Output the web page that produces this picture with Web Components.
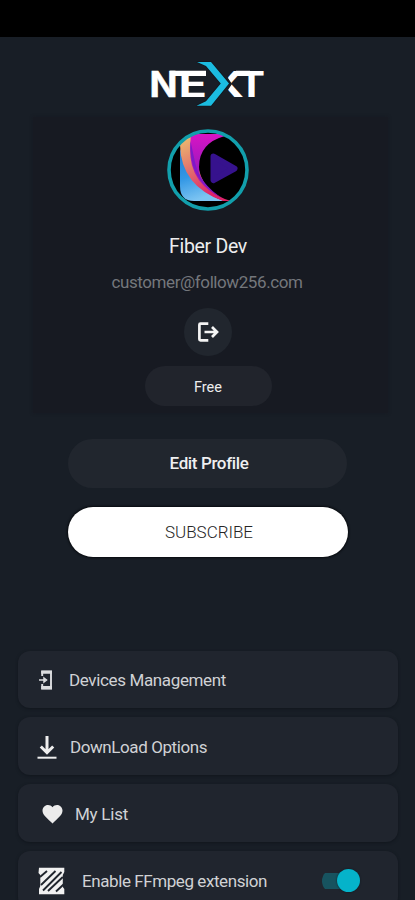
<!DOCTYPE html>
<html lang="en">
<head>
<meta charset="utf-8">
<title>Profile</title>
<style>
html,body{margin:0;height:900px;overflow:hidden;background:#181e26}
body{font-family:Roboto,"Liberation Sans",sans-serif}
</style>
</head>
<body>
<profile-screen></profile-screen>
<script>
const define = (name, markup, setup) => customElements.define(name, class extends HTMLElement {
  constructor() {
    super();
    this.attachShadow({ mode: 'open' }).innerHTML = markup;
  }
  connectedCallback() { if (setup) setup(this); }
});

/* Single line of text whose tracking is adjusted to a given width. */
define('tracked-text', `<style>
:host{display:block;white-space:pre;line-height:1}
span{display:block;width:max-content}
</style><span></span>`, el => {
  const s = el.shadowRoot.querySelector('span');
  s.textContent = el.getAttribute('text');
  const n = s.textContent.length;
  const w = parseFloat(el.getAttribute('width'));
  const gap = (w - s.getBoundingClientRect().width) / n;
  s.style.letterSpacing = gap.toFixed(3) + 'px';
});

define('brand-logo', `<style>
:host{display:block;width:116px;height:46px}
svg{display:block}
text{font-family:Inter,sans-serif;font-weight:700;fill:#fff}
</style>
<svg width="116" height="46" viewBox="150 61 116 46">
<defs><clipPath id="r"><path d="M216 60H246V108H216L232 84Z"/></clipPath></defs>
<text x="149.500" y="96.600" font-size="35.500" textLength="28" lengthAdjust="spacingAndGlyphs" stroke="#fff" stroke-width=".5">N</text>
<text x="178.500" y="96.600" font-size="35.500" textLength="28.500" lengthAdjust="spacingAndGlyphs">E</text>
<g clip-path="url(#r)"><text x="209" y="96.600" font-size="35.500" textLength="35" lengthAdjust="spacingAndGlyphs">X</text></g>
<text x="238" y="96.600" font-size="35.500" textLength="27" lengthAdjust="spacingAndGlyphs">T</text>
<path d="M170 70.800H206V76H174Z M236 70.800H250V76H236Z" fill="#fff"/>
<path d="M197 62H211L229 83.500L211 105.800H196.500L206 101.200L220.800 83.500L206 66Z" fill="#1bbce0" stroke="#12171e" stroke-width="1.600" paint-order="stroke"/>
</svg>`);

define('user-avatar', `<style>
:host{display:block;width:82px;height:82px}
svg{display:block}
</style>
<svg width="82" height="82" viewBox="167 129 82 82">
<defs>
<clipPath id="c"><circle cx="208" cy="170" r="38"/></clipPath>
<linearGradient id="b" x1="0" y1="0" x2=".3" y2="1"><stop offset="0" stop-color="#247ad0"/><stop offset=".55" stop-color="#3297e5"/><stop offset="1" stop-color="#7cc4f2"/></linearGradient>
<linearGradient id="o" x1="0" y1="0" x2=".35" y2="1"><stop offset="0" stop-color="#edc86f"/><stop offset=".5" stop-color="#e3786d"/><stop offset="1" stop-color="#df2368"/></linearGradient>
<linearGradient id="p" x1="0" y1="0" x2="0" y2="1"><stop offset="0" stop-color="#d814c4"/><stop offset=".5" stop-color="#a218be"/><stop offset="1" stop-color="#c51c8f"/></linearGradient>
</defs>
<circle cx="208" cy="170" r="38" fill="#000"/>
<g clip-path="url(#c)">
<path d="M180 148V186Q180 201 194 201H224Q192 190 180 148Z" fill="url(#b)"/>
<path d="M180 145Q182 134 195 133L199 170Q205 194 231 201H223Q181 186 180 145Z" fill="url(#o)"/>
<path d="M191 134H225V136Q199 143 199 167Q199 190 228 200Q189 187 190 147Z" fill="url(#p)"/>
<path d="M190.500 141Q188 182 223 198.500Q199 184 194.500 160Z" fill="#7d1ac6"/>
<path d="M213.500 156.500L234.500 168.500L213.500 180Z" fill="#36128d" stroke="#36128d" stroke-width="6" stroke-linejoin="round"/>
</g>
<circle cx="208" cy="170" r="39" fill="none" stroke="#129fac" stroke-width="3.600"/>
</svg>`);

define('pill-button', `<style>
:host{display:flex;align-items:center;justify-content:center;box-sizing:border-box;flex:none;background:#21262e;border-radius:30px}
</style><slot></slot>`);

define('ui-icon', `<style>:host{display:block;flex:none}svg{display:block;overflow:visible}</style><svg></svg>`, el => {
  const icons = {
    logout: [24, 24, '<g fill="none" stroke="#f4f4f4" stroke-width="2.700"><path d="M12.300 3.600H4.500Q3.400 3.600 3.400 4.700V19.300Q3.400 20.400 4.500 20.400H12.300"/><path d="M8.500 12H20.500M16 7L21 12L16 17"/></g>'],
    device: [14, 20, '<path d="M3.200 6V1.700H12V18.300H3.200V14" fill="none" stroke="#dcdddf" stroke-width="1.900"/><path d="M2.200.5H13V3.800H2.200ZM2.200 16H13V19.500H2.200Z" fill="#dcdddf"/><path d="M0 10H6M5 8L7.500 10L5 12Z" fill="#dcdddf" stroke="#dcdddf" stroke-width="1.500"/>'],
    download: [20, 24, '<path d="M10 1V17.500M3.800 11.500L10 17.700L16.200 11.500" fill="none" stroke="#eee" stroke-width="3"/><path d="M.5 22.700H19.500" stroke="#eee" stroke-width="2"/>'],
    heart: [21, 20, '<path d="M10.500 19.400L9 18C3.500 13 .5 10.300 .5 6.600C.5 3.500 2.900 1 6 1C7.700 1 9.400 1.900 10.500 3.200C11.600 1.900 13.300 1 15 1C18.100 1 20.500 3.500 20.500 6.600C20.500 10.300 17.500 13 12 18Z" fill="#ececec"/>'],
    ffmpeg: [27, 28, '<path d="M1 .7H26.300V5L24.800 8V20L26.300 22V27.300H1V22L2.300 19V8L.5 6Z" fill="#f1f1f1"/><g stroke="#20252d" stroke-width="1.900" fill="none"><path d="M2 10L9 4M3 18L17.500 4M5 23.500L23.500 5M10 24L24.800 10M18 24.500L25.500 17.500"/></g>']
  };
  const [w, h, body] = icons[el.getAttribute('name')];
  const svg = el.shadowRoot.querySelector('svg');
  svg.setAttribute('width', w);
  svg.setAttribute('height', h);
  svg.setAttribute('viewBox', `0 0 ${w} ${h}`);
  svg.innerHTML = body;
});

define('toggle-switch', `<style>
:host{display:flex;align-items:center;justify-content:flex-end;width:38px;height:24px;flex:none;background:linear-gradient(#17535f,#17535f) 0 50%/32px 16px no-repeat;border-radius:12px}
i{width:23px;height:23px;border-radius:50%;background:#05b3ca;box-shadow:0 0 2px #0b1b23}
</style><i></i>`);

define('menu-row', `<style>
:host{display:flex;align-items:center;box-sizing:border-box;height:57.300px;padding-top:1px;border-radius:12px;background:#20252e;box-shadow:0 1px 3px #11161d}
slot[name=icon]{display:block}
slot[name=end]{display:block;margin-left:auto}
::slotted(tracked-text){padding-top:2px}
</style><slot name="icon"></slot><slot></slot><slot name="end"></slot>`);

define('profile-screen', `<style>
:host{display:flex;flex-direction:column;align-items:center;box-sizing:border-box;width:415px;height:900px;overflow:hidden;padding-top:37px;background:linear-gradient(#000 0 37px,#181e26 37px)}
brand-logo{margin-top:24px;flex:none}
section{display:flex;flex-direction:column;align-items:center;width:355px;height:296px;margin:10px 0 0 5px;background:#171a22;padding-top:12px;box-sizing:border-box;flex:none;box-shadow:0 0 3px #171a22}
user-avatar{margin-right:4px;flex:none}
.name{font-size:19.500px;color:#ededee;margin:26px 4px 0 0;font-weight:400}
.mail{font-size:17px;color:#74777c;margin:17px 6px 0 0}
.out{width:48px;height:48px;margin:17px 4px 0 0}
.plan{width:127px;height:40px;margin:10px 4px 0 0;padding-top:5px;background:#21242c;font-size:14.500px;color:#ededed}
.edit{width:279px;height:49.500px;margin-top:25.500px;font-size:17px;font-weight:500;color:#efeff0;padding-left:3px}
.sub{width:280px;height:49.500px;margin:19px 0 0 1px;padding:1px 0 0 2px;background:#fff;font-size:17px;color:#252525;font-weight:300;box-shadow:0 0 2px 1px #080b0f}
nav{display:flex;flex-direction:column;gap:9.700px;width:380px;margin:94px 0 0 1px;flex:none;font-size:17px;color:#d0d2d5}
</style>
<brand-logo></brand-logo>
<section>
<user-avatar></user-avatar>
<tracked-text class="name" text="Fiber Dev" width="78"></tracked-text>
<tracked-text class="mail" text="customer@follow256.com" width="191"></tracked-text>
<pill-button class="out"><ui-icon name="logout"></ui-icon></pill-button>
<pill-button class="plan"><tracked-text text="Free" width="28"></tracked-text></pill-button>
</section>
<pill-button class="edit"><tracked-text text="Edit Profile" width="78.500"></tracked-text></pill-button>
<pill-button class="sub"><tracked-text text="SUBSCRIBE" width="88"></tracked-text></pill-button>
<nav>
<menu-row><ui-icon slot="icon" name="device" style="margin:0 16px 0 21px"></ui-icon><tracked-text text="Devices Management" width="157"></tracked-text></menu-row>
<menu-row><ui-icon slot="icon" name="download" style="margin:0 13px 0 19px"></ui-icon><tracked-text text="DownLoad Options" width="137"></tracked-text></menu-row>
<menu-row><ui-icon slot="icon" name="heart" style="margin:0 12px 0 24px"></ui-icon><tracked-text text="My List" width="53"></tracked-text></menu-row>
<menu-row><ui-icon slot="icon" name="ffmpeg" style="margin:0 17px 0 20px"></ui-icon><tracked-text text="Enable FFmpeg extension" width="185"></tracked-text><toggle-switch slot="end" style="margin-right:38px"></toggle-switch></menu-row>
</nav>`);
</script>
</body>
</html>
